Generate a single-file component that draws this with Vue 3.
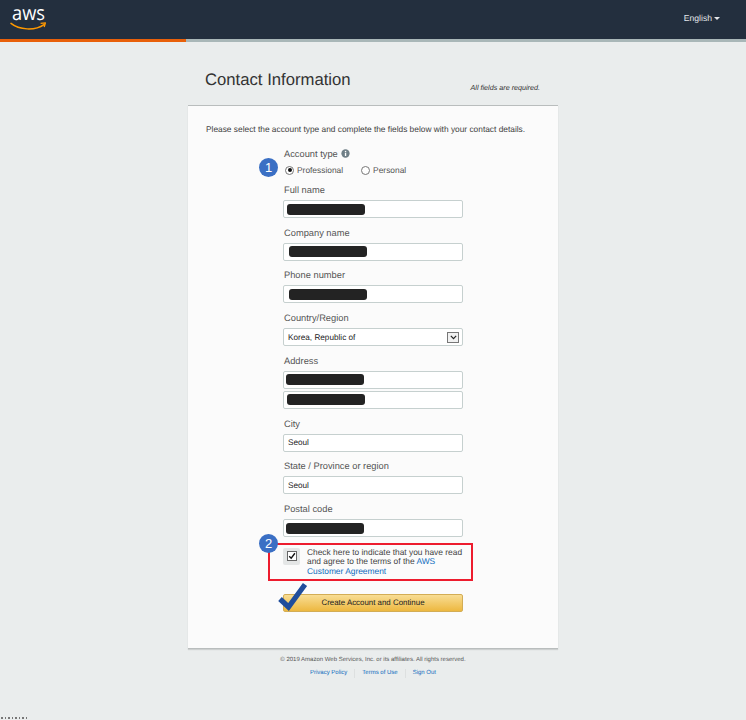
<script setup>
const fieldsA = [
  { label: 'Full name', blob: 78, off: 3 },
  { label: 'Company name', blob: 78, off: 5 },
  { label: 'Phone number', blob: 78, off: 5 }
]
const fieldsB = [
  { label: 'City', value: 'Seoul' },
  { label: 'State / Province or region', value: 'Seoul' }
]
</script>

<template>
  <div class="page">
    <header class="topbar">
      <svg class="logo" viewBox="0 0 44 24" width="44" height="24" aria-label="aws">
        <text x="2" y="12" class="logo-text" textLength="33" lengthAdjust="spacingAndGlyphs">aws</text>
        <path d="M1 15.4C9 22 25 23 34 16.6" fill="none" stroke="#f90" stroke-width="1.5" stroke-linecap="round" />
        <path d="M30.6 15.4L35.4 14.8L34.2 19" fill="none" stroke="#f90" stroke-width="1.3" stroke-linejoin="round" />
      </svg>
      <div class="lang">English<span class="caret"></span></div>
    </header>
    <div class="progress"><div class="progress-done"></div></div>

    <main class="shell">
      <div class="head">
        <h1>Contact Information</h1>
        <em>All fields are required.</em>
      </div>
      <section class="card">
        <p class="intro">Please select the account type and complete the fields below with your contact details.</p>
        <form class="form">
          <div class="account">
            <span class="badge one">1</span>
            <div class="label-line">Account type <svg class="info" viewBox="0 0 10 10" width="9" height="9"><circle cx="5" cy="5" r="4.6" fill="#6f7f87"/><rect x="4.3" y="4.2" width="1.5" height="3.6" fill="#fff"/><rect x="4.3" y="2.1" width="1.5" height="1.4" fill="#fff"/></svg></div>
            <div class="radios">
              <span class="radio-item"><span class="radio on"></span>Professional</span>
              <span class="radio-item"><span class="radio"></span>Personal</span>
            </div>
          </div>

          <div v-for="f in fieldsA" :key="f.label" class="field">
            <label>{{ f.label }}</label>
            <div class="input"><span class="blob" :style="{ marginLeft: f.off + 'px', width: f.blob + 'px' }"></span></div>
          </div>

          <div class="field">
            <label>Country/Region</label>
            <div class="input select">
              <span>Korea, Republic of</span>
              <span class="sel-btn"><svg viewBox="0 0 8 6" width="7" height="5"><path d="M0.8 1L4 4.4L7.2 1" fill="none" stroke="#222" stroke-width="1.4"/></svg></span>
            </div>
          </div>

          <div class="field">
            <label>Address</label>
            <div class="input"><span class="blob" style="margin-left: 2px; width: 78px"></span></div>
            <div class="input second"><span class="blob" style="margin-left: 3px; width: 78px"></span></div>
          </div>

          <div v-for="f in fieldsB" :key="f.label" class="field">
            <label>{{ f.label }}</label>
            <div class="input text">{{ f.value }}</div>
          </div>

          <div class="field">
            <label>Postal code</label>
            <div class="input"><span class="blob" style="margin-left: 2px; width: 78px"></span></div>
          </div>

          <div class="agree">
            <span class="check-wrap"><span class="check"><svg viewBox="0 0 10 10" width="8" height="8"><path d="M1.5 5.2L4 7.8L8.6 1.6" fill="none" stroke="#111" stroke-width="1.7"/></svg></span></span>
            <p>Check here to indicate that you have read and agree to the terms of the <a>AWS Customer Agreement</a></p>
            <span class="red-box"></span>
            <span class="badge two">2</span>
          </div>

          <div class="submit-wrap">
            <button type="button" class="submit">Create Account and Continue</button>
            <svg class="big-check" viewBox="0 0 30 30" width="30" height="30"><path d="M2 18L10.5 26L27 3.5" fill="none" stroke="#1f4d9c" stroke-width="5.2"/></svg>
          </div>
        </form>
      </section>
      <footer class="foot">
        <div class="copy">© 2019 Amazon Web Services, Inc. or its affiliates. All rights reserved.</div>
        <div class="links"><a>Privacy Policy</a><a>Terms of Use</a><a>Sign Out</a></div>
      </footer>
    </main>
    <div class="dots"><i v-for="n in 8" :key="n"></i></div>
  </div>
</template>

<style>
html, body { margin: 0; background: #eaeded; }
</style>

<style scoped>
.page { position: relative; height: 720px; overflow: hidden; background: #eaeded; font-family: "Liberation Sans", Arial, sans-serif; color: #444; text-rendering: geometricPrecision; }
.topbar { height: 39px; background: #232f3e; display: flex; justify-content: space-between; padding: 0 26px 0 10px; box-sizing: border-box; }
.logo { margin-top: 8px; }
.logo-text { font: 20px "Open Sans", sans-serif; fill: #fff; }
.lang { color: #e4e7ea; font-size: 8.6px; line-height: 37px; }
.caret { display: inline-block; margin-left: 2px; vertical-align: 1px; border: 3px solid transparent; border-top-color: #e4e7ea; border-bottom: 0; width: 0; }
.progress { height: 3px; background: #a9b7b8; }
.progress-done { width: 186px; height: 3px; background: #e8600a; }
.shell { width: 370px; margin-left: 188px; }
.head { height: 63px; padding: 28px 18px 0 17px; box-sizing: border-box; display: flex; justify-content: space-between; }
h1 { margin: 0; font-size: 16.7px; font-weight: 400; line-height: 20px; color: #333; }
.head em { font-size: 7.2px; line-height: 10px; margin-top: 13px; color: #333; }
.card { height: 544px; background: #fbfbfb; border-top: 1px solid #b9bdbd; border-bottom: 1px solid #b9bdbd; box-sizing: border-box; box-shadow: 0 1px 1px rgba(0,0,0,.12); }
.intro { margin: 0; padding: 18px 18px 0; font-size: 8.36px; line-height: 11px; color: #444; white-space: nowrap; }
.form { margin: 13px 0 0 95px; width: 180px; }
.account { position: relative; height: 36px; }
.label-line, label { display: block; font-size: 9.3px; line-height: 12px; color: #555; padding-left: 1px; }
.info { vertical-align: -1px; margin-left: 1px; }
.radios { display: flex; gap: 18px; margin-top: 4px; padding-left: 2px; font-size: 8.4px; line-height: 12px; color: #555; }
.radio-item { display: flex; align-items: center; gap: 3px; }
.radio { width: 7px; height: 7px; border: 1px solid #777; border-radius: 50%; background: #fff; position: relative; }
.radio.on::after { content: ""; position: absolute; left: 1.5px; top: 1.5px; width: 4px; height: 4px; border-radius: 50%; background: #111; }
.field { margin-bottom: 8.72px; }
.field label { margin-bottom: 4px; }
.input { height: 18px; box-sizing: border-box; background: #fff; border: 1px solid #c6d0cf; border-radius: 2px; display: flex; align-items: center; }
.input.second { margin-top: 2px; }
.input.text, .select { font-size: 8.2px; color: #222; padding-left: 4px; }
.select { justify-content: space-between; padding-right: 3px; }
.sel-btn { width: 10px; height: 9px; border: 1px solid #777; background: #f1f1f1; display: flex; align-items: center; justify-content: center; }
.blob { display: block; height: 11px; border-radius: 3px; background: #232323; }
.agree { position: relative; display: flex; gap: 7px; margin-top: -3px; height: 38px; padding-top: 5px; box-sizing: border-box; }
.check-wrap { flex: none; width: 17px; height: 17px; border-radius: 2px; background: #e4e6e6; display: flex; align-items: center; justify-content: center; }
.check { width: 8px; height: 8px; background: #fff; border: 1px solid #666; display: flex; }
.agree p { margin: 0; width: 158px; flex: none; font-size: 8.4px; line-height: 9.5px; color: #444; }
.agree a { color: #0f6cbd; }
.red-box { position: absolute; left: -15px; top: 0; width: 205px; height: 38px; border: 2px solid #ed1c2e; box-sizing: border-box; pointer-events: none; }
.badge { position: absolute; width: 19px; height: 19px; border-radius: 50%; background: #3a6fc4; color: #fff; font-size: 13px; line-height: 19px; text-align: center; font-weight: 400; }
.badge.one { left: -24px; top: 10px; }
.badge.two { left: -24px; top: -9px; }
.submit-wrap { position: relative; margin-top: 13px; }
.submit { display: block; width: 180px; height: 18px; padding: 0; border: 1px solid #d3ad55; border-radius: 2px; background: linear-gradient(#f8dd94, #edb840); color: #222; font: 7.9px/16px "Liberation Sans", sans-serif; text-rendering: geometricPrecision; }
.big-check { position: absolute; left: -5px; top: -13px; }
.foot { text-align: center; font-size: 6px; color: #555; }
.copy { margin-top: 7px; line-height: 8px; }
.links { display: flex; justify-content: center; margin-top: 5px; line-height: 9px; color: #0f6cbd; }
.links a { padding: 0 7px; border-left: 1px solid #dde0e0; }
.links a:first-child { border-left: 0; }
.dots { position: absolute; left: 1px; bottom: 1px; display: flex; gap: 2px; }
.dots i { display: block; width: 1.5px; height: 2px; background: #777; }
</style>
